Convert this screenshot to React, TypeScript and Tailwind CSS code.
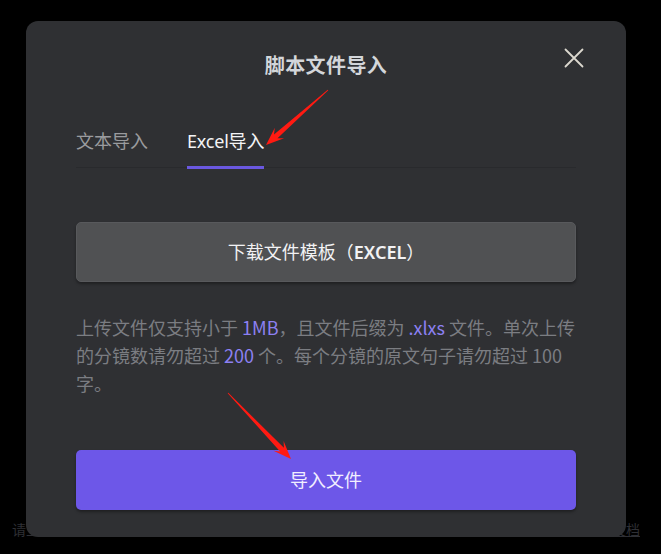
import React from "react";

type Pt = [number, number];

// red annotation arrow, from a thin tail to a barbed head
function arrowPoints(s: Pt, t: Pt) {
  const dx = t[0] - s[0];
  const dy = t[1] - s[1];
  const len = Math.hypot(dx, dy);
  const d: Pt = [dx / len, dy / len];
  const n: Pt = [-d[1], d[0]];
  const at = (base: Pt, back: number, side: number): string =>
    `${(base[0] - d[0] * back + n[0] * side).toFixed(1)},${(
      base[1] - d[1] * back + n[1] * side
    ).toFixed(1)}`;
  return [
    at(s, 0, 0.4),
    at(t, 13, 2.6),
    at(t, 18, 7),
    at(t, 0, 0),
    at(t, 18, -7),
    at(t, 13, -2.6),
    at(s, 0, -0.4),
  ].join(" ");
}

const font = "font-['Noto_Sans','Noto_Sans_CJK_SC',sans-serif]";
const cjk = "font-['Noto_Sans_CJK_SC',sans-serif]";

export default function App() {
  return (
    <div
      className={`relative flex h-[554px] w-full flex-col justify-end overflow-hidden bg-black ${font}`}
    >
      {/* page content behind the overlay */}
      <div className="flex justify-between pb-[14px] pl-[12px] pr-[21px] text-[14px] leading-[20px] text-[#2e2f34]">
        <span>请上传符合要求的脚本文件</span>
        <span className="underline">查看帮助文档</span>
      </div>

      {/* Modal */}
      <div className="absolute left-[26px] top-[21px] w-[600px] rounded-[12px] bg-[#2f3033] px-[50px] pb-[27px] pt-[31px]">
        <h3 className="text-center text-[20px] font-bold leading-[28px] tracking-[0.4px] text-[#d3d6da]">
          脚本文件导入
        </h3>
        <button className="absolute left-[538px] top-[27px] h-[20px] w-[20px]">
          <svg viewBox="0 0 20 20" className="h-[20px] w-[20px]">
            <path
              d="M1.5 1.5 L18.5 18.5 M18.5 1.5 L1.5 18.5"
              stroke="#dcd8cf"
              strokeWidth="1.8"
              strokeLinecap="round"
            />
          </svg>
        </button>

        {/* Tabs */}
        <div className="mt-[48px] flex gap-[39px] border-b border-[#292a2d]">
          <div className="-mb-[2px] border-b-[3px] border-transparent pb-[12px] text-[18px] leading-[26px] text-[#9a9b9e]">
            文本导入
          </div>
          <div className="-mb-[2px] border-b-[3px] border-[#6a58e0] pb-[12px] text-[18px] leading-[26px] tracking-[-0.2px] text-[#f4f4f6]">
            Excel导入
          </div>
        </div>

        <button className="mt-[54px] flex h-[60px] w-full items-center justify-center rounded-[5px] border border-[#58595c] bg-[#505153] text-[18px] text-[#f2f2f4] shadow-[0_2px_3px_rgba(0,0,0,0.35)]">
          下载文件模板（<span className="font-semibold">EXCEL</span>）
        </button>

        <p
          className={`mt-[31px] whitespace-nowrap text-[18px] leading-[28px] text-[#7b7d82] ${cjk}`}
        >
          上传文件仅支持小于 <span className="text-[#8c80f2]">1MB</span>
          ，且文件后缀为 <span className="text-[#8c80f2]">.xlxs</span>{" "}
          文件。单次上传
          <br />
          的分镜数请勿超过 <span className="text-[#8c80f2]">200</span>{" "}
          个。每个分镜的原文句子请勿超过 100
          <br />
          字。
        </p>

        <button className="mt-[53px] flex h-[60px] w-full items-center justify-center rounded-[5px] bg-[#6d57e8] text-[18px] text-[#f1eeff] shadow-[0_2px_3px_rgba(0,0,0,0.35)]">
          导入文件
        </button>
      </div>

      {/* annotation arrows */}
      <svg
        className="pointer-events-none absolute left-0 top-0 h-[554px] w-[661px]"
        viewBox="0 0 661 554"
      >
        <polygon points={arrowPoints([328, 90], [266, 145])} fill="#ff1a12" />
        <polygon points={arrowPoints([228, 393], [291, 459])} fill="#ff1a12" />
      </svg>
    </div>
  );
}
